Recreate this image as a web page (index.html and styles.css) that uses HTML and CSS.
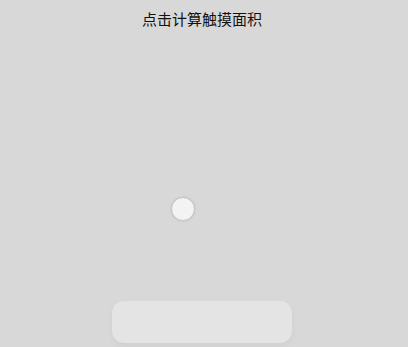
FILE: index.html
```html
<!DOCTYPE html>
<html lang="zh-CN">
<head>
    <meta charset="UTF-8">
    <meta name="viewport" content="width=device-width, initial-scale=1.0">
    <title>触摸面积</title>
    <link rel="stylesheet" href="styles.css">
</head>
<body>
    <header class="title">点击计算触摸面积</header>

    <section class="stage">
        <div class="touch-dot" style="left: 171px; top: 197px;"></div>
    </section>

    <footer class="bottom">
        <div class="result-box"></div>
    </footer>
</body>
</html>
```

FILE: styles.css
```css
* {
    margin: 0;
    padding: 0;
    box-sizing: border-box;
}

html, body {
    height: 100%;
}

body {
    background-color: #d8d8d8;
    font-family: "Noto Sans CJK SC", "Noto Sans", sans-serif;
    color: #111;
    display: flex;
    flex-direction: column;
    overflow: hidden;
    position: relative;
}

.title {
    text-align: center;
    font-size: 15px;
    line-height: 20px;
    padding-top: 9px;
    padding-right: 4px;
}

.stage {
    flex: 1;
}

.touch-dot {
    position: absolute;
    width: 24px;
    height: 24px;
    border-radius: 50%;
    background-color: #f3f3f3;
    border: 1px solid #c4c4c4;
    box-shadow: 0 0 2px rgba(0, 0, 0, 0.12);
}

.bottom {
    display: flex;
    justify-content: flex-start;
    padding-left: 112px;
    padding-bottom: 4px;
}

.result-box {
    width: 180px;
    height: 42px;
    border-radius: 12px;
    background-color: #e3e4e3;
    box-shadow: 0 3px 6px rgba(0, 0, 0, 0.04);
}
```
